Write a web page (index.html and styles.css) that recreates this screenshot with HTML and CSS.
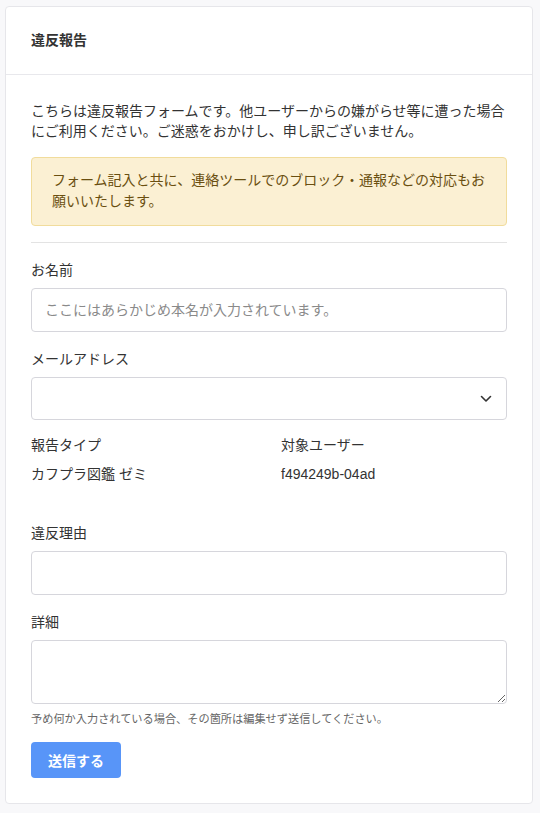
FILE: index.html
```html
<!DOCTYPE html>
<html lang="ja">
<head>
<meta charset="utf-8">
<title>違反報告</title>
<link rel="stylesheet" href="styles.css">
</head>
<body>
<div class="card">
  <div class="card-header">違反報告</div>
  <div class="card-body">
    <p class="intro">こちらは違反報告フォームです。他ユーザーからの嫌がらせ等に遭った場合にご利用ください。ご迷惑をおかけし、申し訳ございません。</p>
    <div class="alert">フォーム記入と共に、連絡ツールでのブロック・通報などの対応もお願いいたします。</div>
    <hr class="divider">
    <div class="field wide">
      <label class="label" for="name">お名前</label>
      <input class="control" id="name" type="text" placeholder="ここにはあらかじめ本名が入力されています。">
    </div>
    <div class="field">
      <label class="label" for="mail">メールアドレス</label>
      <div class="select-wrap">
        <select class="control select" id="mail"><option></option></select>
        <svg class="chevron" width="12" height="8" viewBox="0 0 12 8"><path d="M1.5 1.5 L6 6 L10.5 1.5" fill="none" stroke="#333" stroke-width="1.6" stroke-linecap="round" stroke-linejoin="round"/></svg>
      </div>
    </div>
    <div class="info">
      <div class="info-col">
        <div class="info-label">報告タイプ</div>
        <div class="info-value">カフプラ図鑑 ゼミ</div>
      </div>
      <div class="info-col">
        <div class="info-label">対象ユーザー</div>
        <div class="info-value">f494249b-04ad</div>
      </div>
    </div>
    <div class="field wide">
      <label class="label" for="reason">違反理由</label>
      <input class="control" id="reason" type="text">
    </div>
    <div class="field">
      <label class="label" for="detail">詳細</label>
      <textarea class="control textarea" id="detail"></textarea>
      <div class="help">予め何か入力されている場合、その箇所は編集せず送信してください。</div>
    </div>
    <button class="submit" type="button">送信する</button>
  </div>
</div>
</body>
</html>
```

FILE: styles.css
```css
* { box-sizing: border-box; }
html, body { background: #f8f8fa; }
body {
  margin: 6px 7px 8px 5px;
  font-family: "Liberation Sans", "Noto Sans CJK JP", sans-serif;
  font-size: 14px;
  color: #333;
}
.card {
  background: #fff;
  border: 1px solid #e6e6ea;
  border-radius: 4px;
}
.card-header {
  padding: 23px 25px 23px;
  font-weight: bold;
  font-size: 14px;
  line-height: 21px;
  color: #333;
  border-bottom: 1px solid #e8e8ec;
}
.card-body {
  padding: 26px 25px 25px;
}
.intro {
  margin: 0 0 16px;
  line-height: 20px;
}
.alert {
  background: #fbf0d3;
  border: 1px solid #f1dc9c;
  border-radius: 4px;
  padding: 12px 20px 13px;
  line-height: 21px;
  color: #6a4f10;
}
.divider {
  border: 0;
  border-top: 1px solid #e3e3e3;
  margin: 16px 0 17px;
}
.field { margin-bottom: 15px; }
.field.wide { margin-bottom: 17px; }
.label {
  display: block;
  line-height: 21px;
  margin-bottom: 7px;
  color: #333;
}
.control {
  display: block;
  width: 100%;
  height: 44px;
  border: 1px solid #d6d6dc;
  border-radius: 4px;
  background: #fff;
  padding: 0 13px;
  font-family: inherit;
  font-size: 14px;
  color: #333;
  outline: none;
}
.control::placeholder { color: #8a8a8a; }
.select-wrap { position: relative; }
.select {
  appearance: none;
  -webkit-appearance: none;
  height: 43px;
}
.chevron {
  position: absolute;
  right: 15px;
  top: 18px;
}
.info {
  display: grid;
  grid-template-columns: 1fr 1fr;
  column-gap: 24px;
  margin-bottom: 38px;
}
.info-label { line-height: 21px; }
.info-value { line-height: 21px; margin-top: 8px; }
.textarea {
  height: 64px;
  padding: 8px 13px;
  resize: vertical;
}
.help {
  margin-top: 7px;
  font-size: 11.2px;
  line-height: 16px;
  color: #666;
}
.submit {
  display: block;
  height: 36px;
  padding: 0 17px;
  border: 0;
  border-radius: 4px;
  background: #5895f8;
  color: #fff;
  font-family: inherit;
  font-size: 14px;
  font-weight: bold;
}
```
